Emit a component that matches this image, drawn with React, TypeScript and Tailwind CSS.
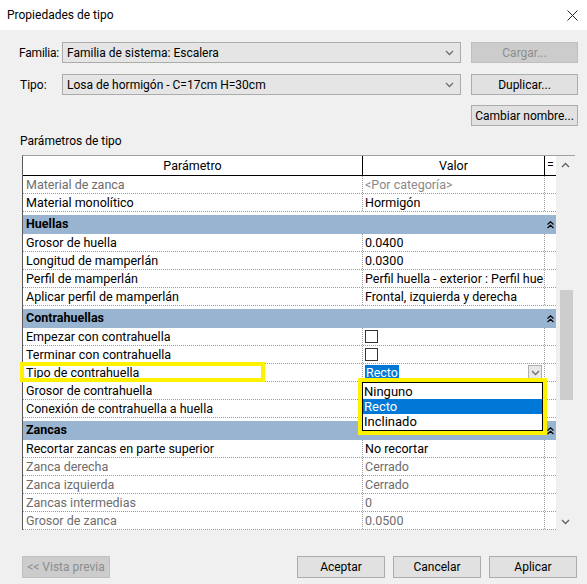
import React from "react";

type Row =
  | { kind: "group"; label: string }
  | { kind: "row"; label: string; value?: string; gray?: boolean; check?: boolean; select?: boolean };

const ROWS: Row[] = [
  { kind: "row", label: "Material de zanca", value: "<Por categoría>", gray: true },
  { kind: "row", label: "Material monolítico", value: "Hormigón" },
  { kind: "group", label: "Huellas" },
  { kind: "row", label: "Grosor de huella", value: "0.0400" },
  { kind: "row", label: "Longitud de mamperlán", value: "0.0300" },
  { kind: "row", label: "Perfil de mamperlán", value: "Perfil huella - exterior : Perfil huell" },
  { kind: "row", label: "Aplicar perfil de mamperlán", value: "Frontal, izquierda y derecha" },
  { kind: "group", label: "Contrahuellas" },
  { kind: "row", label: "Empezar con contrahuella", check: true },
  { kind: "row", label: "Terminar con contrahuella", check: true },
  { kind: "row", label: "Tipo de contrahuella", select: true },
  { kind: "row", label: "Grosor de contrahuella" },
  { kind: "row", label: "Conexión de contrahuella a huella" },
  { kind: "group", label: "Zancas" },
  { kind: "row", label: "Recortar zancas en parte superior", value: "No recortar" },
  { kind: "row", label: "Zanca derecha", value: "Cerrado", gray: true },
  { kind: "row", label: "Zanca izquierda", value: "Cerrado", gray: true },
  { kind: "row", label: "Zancas intermedias", value: "0", gray: true },
  { kind: "row", label: "Grosor de zanca", value: "0.0500", gray: true },
];

const Chevron = ({ up = false, color = "#606060" }: { up?: boolean; color?: string }) => (
  <svg width="9" height="6" viewBox="0 0 9 6" fill="none">
    <path d={up ? "M1 5 L4.5 1.5 L8 5" : "M1 1 L4.5 4.5 L8 1"} stroke={color} strokeWidth="1.3" />
  </svg>
);

const Collapse = () => (
  <svg width="7" height="8" viewBox="0 0 7 8" fill="none">
    <path d="M0.5 3.5 L3.5 0.8 L6.5 3.5 M0.5 7 L3.5 4.3 L6.5 7" stroke="#000" strokeWidth="1.2" />
  </svg>
);

const Btn = ({ children, disabled = false }: { children: React.ReactNode; disabled?: boolean }) => (
  <div
    className={
      disabled
        ? "w-[107px] h-[21px] flex items-center justify-center whitespace-nowrap bg-[#cccccc] border border-[#bfbfbf] text-[#8d8d8d]"
        : "w-[107px] h-[21px] flex items-center justify-center whitespace-nowrap bg-[#e1e1e1] border border-[#adadad] text-black"
    }
  >
    {children}
  </div>
);

const Select = ({ text }: { text: string }) => (
  <div className="w-[399px] h-[21px] flex items-center justify-between bg-[#e5e5e5] border border-[#acacac] pl-[4px] pr-[6px]">
    <span className="whitespace-nowrap">{text}</span>
    <Chevron color="#6f6f6f" />
  </div>
);

function TableRow({ row }: { row: Row }) {
  if (row.kind === "group") {
    return (
      <div className="h-[22px] border-t-[3px] border-white bg-[#99b4d1] flex items-center font-bold">
        <div className="w-[521px] pl-[3px]">{row.label}</div>
        <div className="w-[12px] flex justify-center">
          <Collapse />
        </div>
      </div>
    );
  }
  const tc = row.gray ? "text-[#6d6d6d]" : "text-black";
  return (
    <div className="h-[18px] flex border-b border-dotted border-[#9a9a9a] bg-white leading-[17px]">
      <div className={`w-[339px] pl-[3px] whitespace-nowrap overflow-hidden ${tc}`}>{row.label}</div>
      <div className={`w-[182px] border-l border-dotted border-[#9a9a9a] pl-[2px] whitespace-nowrap overflow-hidden flex items-center ${row.gray && row.value?.startsWith("<") ? "text-[#8a8a8a]" : tc}`}>
        {row.value}
        {row.check && <div className="w-[13px] h-[13px] border border-[#333] bg-white" />}
        {row.select && (
          <div className="flex-1 flex items-center justify-between pr-[2px]">
            <span className="bg-[#0078d7] text-white px-[1px] leading-[16px]">Recto</span>
            <div className="w-[14px] h-[15px] bg-[#e8e8e8] border border-[#b0b0b0] flex items-center justify-center">
              <Chevron color="#707070" />
            </div>
          </div>
        )}
      </div>
      <div className="w-[12px] border-l border-dotted border-[#9a9a9a]" />
    </div>
  );
}

export default function App() {
  return (
    <div className="relative w-[587px] h-[584px] overflow-hidden bg-[#f0f0f0] text-[12px] text-black font-['Roboto',sans-serif] flex flex-col">
      <div className="h-[30px] bg-white flex items-center justify-between pl-[7px] pr-[9px] shrink-0">
        <span>Propiedades de tipo</span>
        <svg width="11" height="11" viewBox="0 0 11 11" fill="none">
          <path d="M0.5 0.5 L10.5 10.5 M10.5 0.5 L0.5 10.5" stroke="#222" strokeWidth="1" />
        </svg>
      </div>

      <div className="mt-[12px] flex items-center">
        <div className="w-[62px] pl-[19px] whitespace-nowrap tracking-[-0.2px]">Familia:</div>
        <Select text="Familia de sistema: Escalera" />
        <div className="ml-[10px]">
          <Btn disabled>Cargar...</Btn>
        </div>
      </div>

      <div className="mt-[11px] flex items-center">
        <div className="w-[62px] pl-[20px]">Tipo:</div>
        <Select text="Losa de hormigón - C=17cm H=30cm" />
        <div className="ml-[10px]">
          <Btn>Duplicar...</Btn>
        </div>
      </div>

      <div className="mt-[10px] pl-[471px]">
        <Btn>Cambiar nombre...</Btn>
      </div>

      <div className="mt-[7px] pl-[20px] leading-[16px]">Parámetros de tipo</div>

      <div className="mt-[6px] ml-[22px] w-[553px] h-[375px] flex border-t border-[#a0a0a0] border-l border-l-[#5a5a5a] text-[12.5px]">
        <div className="w-[533px] flex flex-col bg-white">
          <div className="h-[20px] flex border-b border-black bg-white leading-[19px]">
            <div className="w-[339px] text-center">Parámetro</div>
            <div className="w-[182px] text-center border-l border-black">Valor</div>
            <div className="w-[12px] text-center border-l border-black leading-[17px]">=</div>
          </div>
          {ROWS.map((r, i) => (
            <TableRow key={i} row={r} />
          ))}
        </div>
        <div className="w-[19px] flex flex-col bg-[#f0f0f0]">
          <div className="h-[17px] flex items-center justify-center">
            <Chevron up />
          </div>
          <div className="flex-1">
            <div className="mt-[117px] ml-[4px] w-[13px] h-[110px] bg-[#cdcdcd]" />
          </div>
          <div className="h-[17px] flex items-center justify-center">
            <Chevron />
          </div>
        </div>
      </div>

      <div className="mt-[26px] flex items-center pr-[10px]">
        <div className="ml-[22px] w-[88px] h-[22px] flex items-center justify-center whitespace-nowrap bg-[#cccccc] border border-[#bfbfbf] text-[#8d8d8d]">
          &lt;&lt; Vista previa
        </div>
        <div className="flex-1" />
        <div className="flex gap-[8px]">
          {["Aceptar", "Cancelar", "Aplicar"].map((t) => (
            <div key={t} className="w-[88px] h-[22px] flex items-center justify-center bg-[#e1e1e1] border border-[#adadad]">
              {t}
            </div>
          ))}
        </div>
      </div>

      {/* dropdown list open over the grid */}
      <div className="absolute left-[362px] top-[382px] w-[181px] h-[49px] bg-white border border-black text-[13px] leading-[15px] pt-[1px]">
        <div className="pl-[1px]">Ninguno</div>
        <div className="pl-[1px] bg-[#0078d7] text-white">Recto</div>
        <div className="pl-[1px]">Inclinado</div>
      </div>

      {/* yellow annotation boxes */}
      <div className="absolute left-[20px] top-[362px] w-[245px] h-[20px] border-[4px] border-[#fff200]" />
      <div className="absolute left-[358px] top-[378px] w-[189px] h-[57px] border-[4px] border-[#fff200]" />
    </div>
  );
}
